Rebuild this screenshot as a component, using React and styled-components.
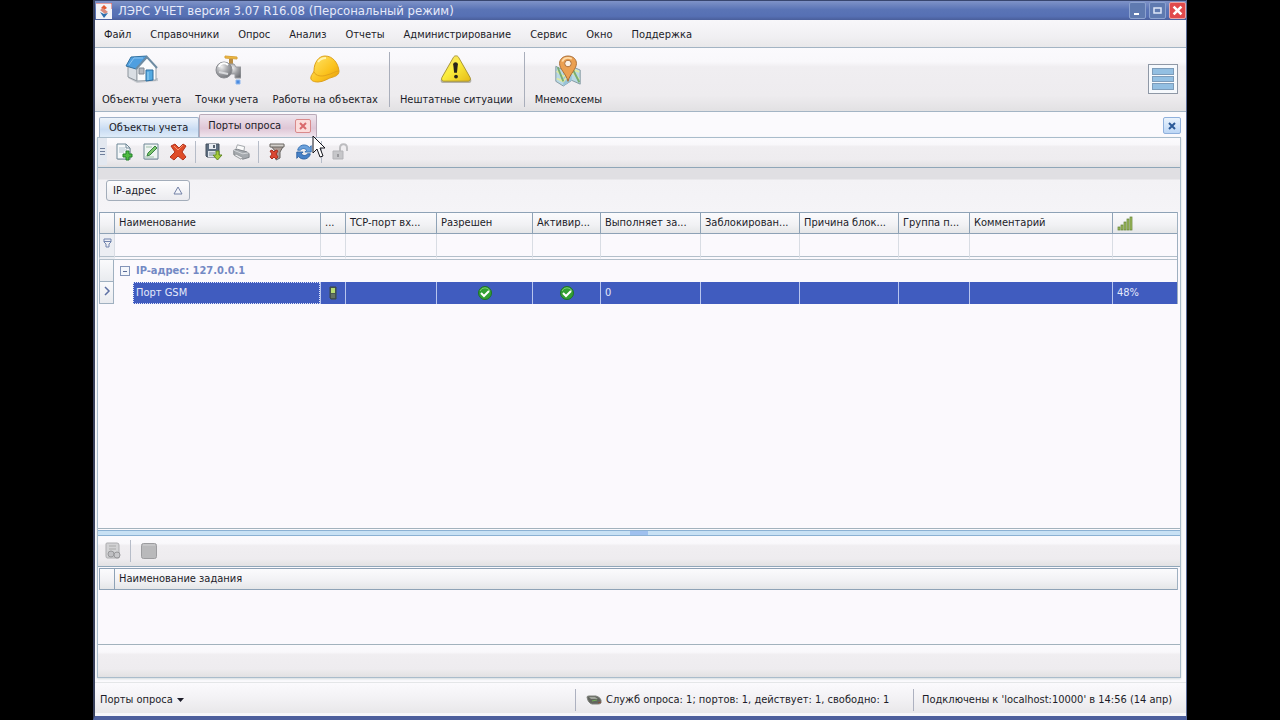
import React from 'react';
import styled, { createGlobalStyle, css } from 'styled-components';

const GlobalStyle = createGlobalStyle`
    *, *::before, *::after {
        box-sizing: border-box;
    }
    body {
        margin: 0;
        background: #000;
        color: #1c1c28;
        font-family: 'DejaVu Sans Condensed', 'DejaVu Sans', sans-serif;
        font-size: 11px;
        line-height: 14px;
    }
    button, input {
        font: inherit;
        color: inherit;
    }
    button {
        margin: 0;
        padding: 0;
        border: 0;
        background: none;
    }
`;

const band = css`
    background: linear-gradient(#fbfafd 0%, #f9f8fb 22%, #f0eef1 30%, #eeecef 75%, #e2e1e3 100%);
`;

const Window = styled.div`
    display: flex;
    flex-direction: column;
    min-height: 100vh;
    margin: 0 93px;
    border-left: 2px solid #39415c;
    border-right: 1px solid #5a6a94;
    border-bottom: 4px solid #4d5f9c;
    background: #fbfafd;
`;

const TitleBar = styled.header`
    display: flex;
    align-items: center;
    gap: 6px;
    height: 20px;
    padding-left: 1px;
    border-top: 1px solid #38466f;
    background: linear-gradient(#7f93c8, #5a74b6 45%, #5670b4 80%, #4a5f9b);
    color: #e6eafa;
`;

const TitleText = styled.h1`
    flex: 1;
    margin: 0;
    font-size: 13px;
    font-weight: 400;
    line-height: 16px;
`;

const WindowButtons = styled.div`
    display: flex;
    gap: 3px;
`;

const WindowButton = styled.button`
    display: grid;
    place-items: center;
    width: 17px;
    height: 17px;
    border: 1px solid ${({ $danger }) => ($danger ? '#e9a5a5' : '#8ca2cf')};
    border-radius: 2px;
    background: ${({ $danger }) => ($danger ? '#e14a4c' : '#5f7ab0')};
`;

const MenuBar = styled.nav`
    display: flex;
    gap: 19px;
    height: 28px;
    padding: 8px 9px 0;
    border-bottom: 1px solid #a3b4c4;
    background: linear-gradient(#f8f7fa, #f1f0f3 60%, #e9e8ea);
`;

const MenuItem = styled.button`
    height: 14px;
`;

const Ribbon = styled.div`
    display: flex;
    align-items: stretch;
    height: 64px;
    border-bottom: 1px solid #a3b4c4;
    ${band}
`;

const RibbonButton = styled.button`
    display: flex;
    flex-direction: column;
    align-items: center;
    justify-content: space-between;
    padding: 6px 7px 4px;
    white-space: nowrap;
`;

const RibbonLine = styled.span`
    width: 1px;
    margin: 4px 3px 4px 4px;
    background: #a9aebb;
`;

const ListButton = styled.button`
    display: flex;
    flex-direction: column;
    justify-content: center;
    gap: 1px;
    width: 30px;
    height: 30px;
    margin: 16px 8px 0 auto;
    padding: 3px;
    border: 1px solid #8f98a6;
    background: #f6f9fd;
    & > span {
        height: 7px;
        border: 1px solid #7d9cba;
        background: #93bfe2;
    }
`;

const TabStrip = styled.div`
    display: flex;
    align-items: flex-end;
    height: 25px;
    padding: 0 5px 0 4px;
`;

const Tab = styled.button`
    position: relative;
    display: flex;
    align-items: center;
    gap: 14px;
    height: ${({ $active }) => ($active ? 23 : 20)}px;
    padding: 0 ${({ $active }) => ($active ? 5 : 10)}px 0 ${({ $active }) => ($active ? 8 : 9)}px;
    border: 1px solid ${({ $active }) => ($active ? '#b9a9b8' : '#9fb1c9')};
    border-bottom: 0;
    border-radius: 2px 2px 0 0;
    background: ${({ $active }) => ($active
        ? 'linear-gradient(#eee6ee, #dfc6d6 60%, #f0e6ee)'
        : 'linear-gradient(#eef4fb, #c9dcf3 60%, #dfecf9)')};
`;

const CloseMark = styled.span`
    display: grid;
    place-items: center;
    width: 16px;
    height: 14px;
    border: 1px solid #d98a8c;
    border-radius: 2px;
    background: #fbdcdb;
`;

const Cursor = styled.svg`
    position: absolute;
    left: 112px;
    top: 20px;
    z-index: 2;
`;

const CloseAll = styled.button`
    display: grid;
    place-items: center;
    width: 18px;
    height: 17px;
    margin: 0 0 3px auto;
    border: 1px solid #8fb0dc;
    border-radius: 2px;
    background: linear-gradient(#eaf3fd, #bcd6f5);
`;

const Document = styled.main`
    display: flex;
    flex: 1;
    flex-direction: column;
    margin: 0 5px 4px 2px;
    border: 1px solid #a9bccb;
    box-shadow: 0 1px 2px #d3dbde;
`;

const ToolBar = styled.div`
    display: flex;
    align-items: center;
    height: 30px;
    padding: 0 0 2px ${({ $inset }) => $inset}px;
    border-bottom: 1px solid #8fa6b8;
    ${band}
`;

const Grip = styled.span`
    display: flex;
    flex-direction: column;
    justify-content: center;
    gap: 1px;
    width: 12px;
    height: 27px;
    padding: 0 5px 0 2px;
    background: linear-gradient(90deg, #e3e8f0 9px, transparent 9px);
    & > i {
        height: 1px;
        background: #6f7f9c;
        margin-bottom: 1px;
    }
`;

const ToolButton = styled.button`
    display: grid;
    place-items: center;
    width: 27px;
    height: 22px;
`;

const ToolLine = styled.span`
    width: 1px;
    height: 22px;
    margin: 0 4px;
    background: #b6bcc8;
`;

const GroupPanel = styled.div`
    height: 44px;
    padding: 12px 7px 0 8px;
    background: linear-gradient(#e0dfe3 0, #e0dfe3 11px, #f3f2f5 12px, #f5f4f7 100%);
`;

const GroupChip = styled.button`
    display: flex;
    align-items: center;
    gap: 17px;
    height: 21px;
    padding: 0 6px;
    border: 1px solid #a3adba;
    border-radius: 3px;
    background: linear-gradient(#fdfdfe, #ebebef);
`;

const GridPane = styled.section`
    flex: ${({ $grow }) => ($grow ? '1 0 auto' : '0 0 auto')};
    min-height: 78px;
    padding: ${({ $grow }) => ($grow ? '0 2px 0 1px' : '1px 2px 0 1px')};
    border-bottom: 1px solid #a2b2bd;
    background: #fbf9fd;
`;

const Grid = styled.table`
    width: 100%;
    table-layout: fixed;
    border-collapse: separate;
    border-spacing: 0;
    border-right: 1px solid #9fb0c0;
`;

const HeadCell = styled.th`
    height: 22px;
    padding: 0 2px 0 4px;
    border: solid #8ea2b6;
    border-width: 1px 0 1px 1px;
    background: linear-gradient(#fbfbfd, #f1f1f4 60%, #e5e6e8);
    font-weight: 400;
    text-align: left;
    white-space: nowrap;
    overflow: hidden;
    & > svg {
        display: block;
    }
`;

const FilterCell = styled.td`
    height: 26px;
    padding: 0;
    border-left: 1px solid ${({ $marker }) => ($marker ? '#9fb0c0' : '#d9dde4')};
    border-bottom: 4px double #b3bfca;
    background: ${({ $marker }) => ($marker ? '#eceef3' : 'transparent')};
    text-align: center;
`;

const FilterInput = styled.input`
    display: block;
    width: 100%;
    height: 20px;
    padding: 0 3px;
    border: 0;
    background: transparent;
    outline: 0;
`;

const MarkerCell = styled.td`
    padding: 0;
    border: solid #9fb0c0;
    border-width: 0 1px 1px 1px;
    background: linear-gradient(#fafafc, #e9ebef);
    text-align: center;
`;

const GroupCell = styled.td`
    height: 22px;
    padding: 0 6px;
    color: #7389c4;
    font-weight: 700;
`;

const GroupLabel = styled.div`
    display: flex;
    align-items: center;
    gap: 6px;
`;

const Expander = styled.button`
    display: grid;
    place-items: center;
    width: 10px;
    height: 10px;
    border: 1px solid #8394b8;
    background: #f4f6fb;
    &::after {
        content: '';
        width: 4px;
        height: 1px;
        background: #5a6c98;
    }
`;

const DataCell = styled.td`
    height: 22px;
    padding: 0 4px;
    border-left: 1px solid #b8c5ee;
    background: #405cbf;
    color: #e4e9fb;
    text-align: ${({ $center }) => ($center ? 'center' : 'left')};
    & > svg {
        display: block;
        margin: 0 auto;
    }
`;

const NameCell = styled.td`
    height: 22px;
    padding: 0 0 0 19px;
`;

const NameValue = styled.div`
    height: 22px;
    padding: 3px 2px;
    border: 1px dotted #dfe5fb;
    background: #405cbf;
    color: #e4e9fb;
`;

const Splitter = styled.div`
    display: flex;
    justify-content: center;
    height: 6px;
    margin: 1px 0;
    border: solid #8bb1d3;
    border-width: 1px 0;
    background: #c8e1f4;
    &::after {
        content: '';
        width: 18px;
        background: #9fc0ee;
    }
`;

const BottomBand = styled.div`
    height: 32px;
    ${band}
`;

const StatusBar = styled.footer`
    display: flex;
    align-items: center;
    height: 34px;
    padding: 0 7px 0 5px;
    border-top: 1px solid #e4e6e8;
    background: linear-gradient(#fbfafd 0%, #f4f3f6 40%, #e9e8ea 90%, #f7f7fa 91%);
`;

const StatusButton = styled.button`
    display: flex;
    align-items: center;
    gap: 4px;
    margin-right: auto;
`;

const StatusText = styled.span`
    display: flex;
    align-items: center;
    gap: 4px;
    min-width: ${({ $width }) => $width}px;
    padding-left: ${({ $inset }) => $inset}px;
    white-space: nowrap;
`;

const StatusLine = styled.span`
    width: 1px;
    height: 22px;
    background: #adb1c0;
`;

const LogoIcon = () => (
    <svg width="16" height="16" viewBox="0 0 16 16">
        <path d="M0 0h16v16H0z" fill="#f2f3f8" />
        <path d="M0 0h16v6" fill="none" stroke="#d34c4c" />
        <path d="M8 2 11 5 8 7 5 5z" fill="#e2572f" />
        <path d="m4 7 3-2 5 4-3 2z" fill="#d98b7c" />
        <path d="m4 9 4 2 4-1-4 5z" fill="#2d6fae" />
    </svg>
);

const HouseIcon = () => (
    <svg width="34" height="30" viewBox="0 0 34 30">
        <path d="m3 24 9 5 21-2v-3z" fill="#8d959d" opacity=".4" />
        <path d="M3 12v11l9 4V13z" fill="#d9dee4" stroke="#8d959c" />
        <path d="M12 13 22 4l9 9v13l-19 1z" fill="#fafbfc" stroke="#98a1a9" />
        <path d="M6 3 22 2 11 15 1 12z" fill="#4f9fe0" stroke="#34719f" />
        <path d="m4 11 5-7h9" fill="none" stroke="#8cc5f0" />
        <path d="m11 15 11-12 10 11" fill="none" stroke="#6e8ca3" strokeWidth="2" />
        <path d="M14 14h5v6h-5z" fill="#b4bac2" stroke="#808892" />
        <path d="M21 16h7v10l-7 1z" fill="#54aae2" stroke="#2c6d9f" />
        <path d="M23 18v8" stroke="#9dd6f5" />
    </svg>
);

const TapIcon = () => (
    <svg width="28" height="32" viewBox="0 0 28 32">
        <defs>
            <radialGradient id="steel" cx=".35" cy=".3" r=".8">
                <stop offset="0" stopColor="#efeff0" />
                <stop offset=".5" stopColor="#a3a4a8" />
                <stop offset="1" stopColor="#6c6e73" />
            </radialGradient>
        </defs>
        <path d="M16 5h4v6h-4z" fill="#b88c45" />
        <path d="m12 2 12 1v2L12 4z" fill="#edb93d" stroke="#d9a23a" />
        <path d="M15 10h6l2 3h5v11h-6v-4h-7z" fill="url(#steel)" stroke="#9a9ca1" />
        <ellipse cx="11" cy="16" rx="8" ry="8" fill="url(#steel)" stroke="#8a8c91" />
        <path d="M6 13c1-4 6-5 9-2" fill="none" stroke="#fff" strokeWidth="2" />
        <path d="m6 18 9 2" stroke="#d8d9dc" strokeWidth="2" />
        <path d="M23 26h4v4h-4z" fill="#4c8ce0" stroke="#8fb8ee" />
    </svg>
);

const HelmetIcon = () => (
    <svg width="32" height="30" viewBox="0 0 32 30">
        <defs>
            <linearGradient id="helmet" x1="0" y1="0" x2="1" y2="1">
                <stop offset="0" stopColor="#ffe76e" />
                <stop offset=".6" stopColor="#fbc21c" />
                <stop offset="1" stopColor="#e39a0c" />
            </linearGradient>
        </defs>
        <path d="M5 17C5 8 10 2 16 2c8 0 13 7 14 15 0 3-2 5-6 6-5 1-9 5-15 5-5 0-8-2-7-5 0-2 2-3 3-6z" fill="url(#helmet)" stroke="#dda11d" />
        <path d="M5 18c2 4 7 5 13 3 5-1 8-4 12-4" fill="none" stroke="#e3a31a" />
        <path d="M9 8c2-3 5-4 8-4" fill="none" stroke="#fff3ae" strokeWidth="2" />
    </svg>
);

const WarningIcon = () => (
    <svg width="34" height="30" viewBox="0 0 36 32">
        <defs>
            <linearGradient id="warn" x1="0" y1="0" x2="1" y2="1">
                <stop offset="0" stopColor="#f6d77c" />
                <stop offset=".45" stopColor="#fbee3e" />
                <stop offset="1" stopColor="#e6ba16" />
            </linearGradient>
        </defs>
        <path d="M18 3c1 0 2 0 3 2l13 22c1 2 0 4-2 4H4c-2 0-3-2-2-4L15 5c1-2 2-2 3-2z" fill="#77745c" opacity=".5" />
        <path d="M18 2c1 0 2 0 3 2l12 21c1 2 0 4-2 4H5c-2 0-3-2-2-4L15 4c1-2 2-2 3-2z" fill="url(#warn)" stroke="#a59232" />
        <path d="M15 11c0-3 5-3 5 0l-1 9h-3z" fill="#28241a" />
        <circle cx="18" cy="24" r="2" fill="#28241a" />
    </svg>
);

const MapIcon = () => (
    <svg width="30" height="34" viewBox="0 0 32 34">
        <path d="m3 12 8 4 9-4 9 4v15l-9-4-9 6-8-5z" fill="#b9d9e5" stroke="#8298a0" />
        <path d="m11 16 9-4v15l-9 6z" fill="#98c3d8" />
        <path d="m4 17 7 6 9-8 8 3M4 25l7 3 9-10 8 8" fill="none" stroke="#dfe9a2" strokeWidth="2" />
        <path d="m5 13 6 15M20 13l8 16" stroke="#79ad72" strokeWidth="2" />
        <path d="M16 1c6 0 9 4 9 8 0 6-7 11-9 19C14 20 7 15 7 9c0-4 3-8 9-8z" fill="#eba052" stroke="#a66931" />
        <path d="M10 7c1-4 6-5 10-3" fill="none" stroke="#ffdca8" strokeWidth="2" />
        <circle cx="16" cy="9" r="3.500" fill="#fcf3e8" stroke="#a96a34" />
    </svg>
);

const SheetIcon = ({ kind }) => (
    <svg width="18" height="18" viewBox="0 0 18 18">
        <path d="M3 2h9l4 4v11H3z" fill="#7d858d" opacity=".35" />
        {kind === 'add' ? (
            <>
                <path d="M2 1h9l4 4v11H2z" fill="#f5f8fa" stroke="#6f8796" />
                <path d="M11 1v4h4" fill="none" stroke="#6f8796" />
                <path d="M4 5h6M4 7h8M4 9h5" stroke="#b3c4cf" />
                <path d="M11 8h3v3h3v3h-3v3h-3v-3H8v-3h3z" fill="#4fbc42" stroke="#23812a" />
            </>
        ) : (
            <>
                <path d="M2 1h14v15H2z" fill="#eef4f1" stroke="#6f8796" />
                <path d="m5 13 1-3 7-7 2 2-7 7z" fill="#7cc46b" stroke="#388143" />
                <path d="M4 4h6M3 14h9" stroke="#9fbfaa" />
            </>
        )}
    </svg>
);

const DeleteIcon = () => (
    <svg width="18" height="18" viewBox="0 0 18 18">
        <path d="m2 3 4-2 4 4 4-4 3 2-4 6 4 5-3 3-5-4-4 4-4-3 5-5z" fill="#df4c28" stroke="#b2331d" />
        <path d="m5 3 4 4 5-5" fill="none" stroke="#f39a77" />
    </svg>
);

const SaveIcon = () => (
    <svg width="18" height="18" viewBox="0 0 18 18">
        <path d="M1 1h13v13H2l-1-1z" fill="#5c6c7f" stroke="#44505f" />
        <path d="M4 1h7v5H4z" fill="#e8ecf2" />
        <path d="M8 2h2v3H8z" fill="#55606e" />
        <path d="M3 8h9v6H3z" fill="#dfe5ec" />
        <path d="M4 10h6M4 12h4" stroke="#7b8998" />
        <path d="M11 8h3v4h3l-4.500 5L8 12h3z" fill="#a6cb3a" stroke="#5f8824" />
    </svg>
);

const PrintIcon = () => (
    <svg width="18" height="18" viewBox="0 0 20 18">
        <path d="m6 1 8 2-1 6-9-2z" fill="#fafafa" stroke="#9b9fa4" />
        <path d="m2 7 4-1 11 3 2 2v4l-7 2-10-5z" fill="#a5a9ae" stroke="#7b7f84" />
        <path d="m2 7 10 4 6-1" fill="none" stroke="#d9dbde" />
        <path d="m4 11 8 4-2 2-7-4z" fill="#ececee" stroke="#94979b" />
    </svg>
);

const FunnelIcon = () => (
    <svg width="18" height="18" viewBox="0 0 18 18">
        <path d="M2 2h14l-4 7v6l-4 2V9z" fill="#a99b95" stroke="#65625f" />
        <path d="M2 1h14v3H2z" fill="#d4d0cc" stroke="#6a6663" />
        <path d="m2 8 2-1 2 2 2-2 2 1-2 3 2 3-2 2-2-2-2 2-2-2 2-3z" fill="#da4732" stroke="#a8301f" />
    </svg>
);

const RefreshIcon = () => (
    <svg width="18" height="18" viewBox="0 0 20 18">
        <path d="M3 7c1-6 9-8 13-3l2-2v7h-7l2-2c-3-3-5-2-7 0z" fill="#6ba1dc" stroke="#326db0" />
        <path d="M17 11c-1 6-9 8-13 3l-2 2V9h7l-2 2c3 3 5 2 7 0z" fill="#4681c8" stroke="#2d609f" />
    </svg>
);

const UnlockIcon = () => (
    <svg width="18" height="18" viewBox="0 0 18 18">
        <path d="M9 9V5c0-5 7-5 7 0v3" fill="none" stroke="#bdbdc0" strokeWidth="2" />
        <path d="M2 8h10v8H2z" fill="#c6c6c9" stroke="#b3b3b7" />
        <path d="M7 11v3" stroke="#98989c" strokeWidth="2" />
    </svg>
);

const DimSheetIcon = () => (
    <svg width="18" height="18" viewBox="0 0 18 18">
        <path d="M2 2q0-1 1-1h10q2 0 2 2v13H3q-1 0-1-2z" fill="#d2d2d4" stroke="#acacaf" />
        <path d="M5 4h7M5 7h7" stroke="#aaa" />
        <circle cx="7" cy="12" r="3" fill="#bfbfc2" stroke="#97979a" />
        <circle cx="13" cy="13" r="3" fill="#c7c7ca" stroke="#97979a" />
    </svg>
);

const StopIcon = () => (
    <svg width="18" height="18" viewBox="0 0 18 18">
        <rect x="1.500" y="1.500" width="15" height="15" rx="2" fill="#b9b9bb" stroke="#9c9c9f" />
        <path d="M3 3h12" stroke="#d1d1d3" />
    </svg>
);

const CheckIcon = () => (
    <svg width="16" height="16" viewBox="0 0 16 16">
        <circle cx="8" cy="8" r="6.500" fill="#33a034" stroke="#1e7425" />
        <path d="M3 6a5.500 5.500 0 0 1 10 0" fill="none" stroke="#7fcc72" />
        <path d="m4 8 3 3 5-5" fill="none" stroke="#fff" strokeWidth="2" />
    </svg>
);

const PhoneIcon = () => (
    <svg width="10" height="16" viewBox="0 0 10 16">
        <path d="M2 2h6v12H3l-1-1z" fill="#4b5a51" stroke="#3a4948" />
        <path d="M3 3h4v5H3z" fill="#b5dc72" />
        <path d="M3 10h4M3 12h4" stroke="#7c8a7c" />
    </svg>
);

const SignalIcon = () => (
    <svg width="17" height="15" viewBox="0 0 17 15">
        {[3, 5, 8, 11, 13].map((height, i) => (
            <rect key={height} x={i * 3 + 1} y={14 - height} width="2" height={height} fill="#a3bf61" stroke="#5f7f31" strokeWidth=".7" />
        ))}
    </svg>
);

const PlugIcon = () => (
    <svg width="16" height="10" viewBox="0 0 16 10">
        <path d="M1 2q0-1 2-1h7q4 1 5 4v3q-1 1-3 1H6Q2 8 1 2z" fill="#62655f" stroke="#7e817b" />
        <path d="M3 2h6l3 2H5z" fill="#a1a59c" />
        <path d="m6 6 5-1" stroke="#6fae53" />
        <path d="m12 8 3-1" stroke="#8e4a38" />
    </svg>
);

const CrossIcon = ({ color, size }) => (
    <svg width={size} height={size} viewBox="0 0 10 10">
        <path d="m2 2 6 6M8 2 2 8" stroke={color} strokeWidth="2" />
    </svg>
);

const menu = ['Файл', 'Справочники', 'Опрос', 'Анализ', 'Отчеты', 'Администрирование', 'Сервис', 'Окно', 'Поддержка'];

const columns = [
    { title: 'Наименование', width: 206 },
    { title: '...', width: 25, value: <PhoneIcon />, center: true },
    { title: 'TCP-порт вх...', width: 91 },
    { title: 'Разрешен', width: 96, value: <CheckIcon />, center: true },
    { title: 'Активир...', width: 68, value: <CheckIcon />, center: true },
    { title: 'Выполняет за...', width: 100, value: '0' },
    { title: 'Заблокирован...', width: 99 },
    { title: 'Причина блок...', width: 99 },
    { title: 'Группа п...', width: 71 },
    { title: 'Комментарий' },
    { title: <SignalIcon />, width: 65, value: '48%' },
];

const PortsGrid = () => (
    <Grid>
        <colgroup>
            <col style={{ width: 15 }} />
            {columns.map((column, i) => (
                <col key={i} style={{ width: column.width }} />
            ))}
        </colgroup>
        <thead>
            <tr>
                <HeadCell />
                {columns.map((column, i) => (
                    <HeadCell key={i} scope="col">{column.title}</HeadCell>
                ))}
            </tr>
        </thead>
        <tbody>
            <tr>
                <FilterCell $marker>
                    <svg width="9" height="10" viewBox="0 0 9 10">
                        <path d="M1 1h7v3L6 6v3H3V6L1 4zM1 3.500h7" fill="none" stroke="#7083ad" />
                    </svg>
                </FilterCell>
                {columns.map((column, i) => (
                    <FilterCell key={i}>
                        <FilterInput aria-label={`filter ${i + 1}`} />
                    </FilterCell>
                ))}
            </tr>
            <tr>
                <MarkerCell />
                <GroupCell colSpan={columns.length}>
                    <GroupLabel>
                        <Expander aria-label="collapse" />
                        IP-адрес: 127.0.0.1
                    </GroupLabel>
                </GroupCell>
            </tr>
            <tr>
                <MarkerCell>
                    <svg width="8" height="10" viewBox="0 0 8 10">
                        <path d="m2 1 4 4-4 4" fill="none" stroke="#5d70a4" strokeWidth="1.500" />
                    </svg>
                </MarkerCell>
                <NameCell>
                    <NameValue>Порт GSM</NameValue>
                </NameCell>
                {columns.slice(1).map((column, i) => (
                    <DataCell key={i} $center={column.center}>{column.value}</DataCell>
                ))}
            </tr>
        </tbody>
    </Grid>
);

const App = () => {
    return (
        <>
            <GlobalStyle />
            <Window>
                <TitleBar>
                    <LogoIcon />
                    <TitleText>ЛЭРС УЧЕТ версия 3.07 R16.08 (Персональный режим)</TitleText>
                    <WindowButtons>
                        <WindowButton aria-label="minimize">
                            <svg width="11" height="11" viewBox="0 0 11 11"><path d="M2 9h5" stroke="#fff" strokeWidth="2" /></svg>
                        </WindowButton>
                        <WindowButton aria-label="maximize">
                            <svg width="11" height="11" viewBox="0 0 11 11"><path d="M2 3h7v5H2z" fill="none" stroke="#dfe7f8" strokeWidth="1.500" /></svg>
                        </WindowButton>
                        <WindowButton $danger aria-label="close">
                            <CrossIcon color="#fff" size={13} />
                        </WindowButton>
                    </WindowButtons>
                </TitleBar>

                <MenuBar>
                    {menu.map((item) => (
                        <MenuItem key={item}>{item}</MenuItem>
                    ))}
                </MenuBar>

                <Ribbon>
                    <RibbonButton><HouseIcon />Объекты учета</RibbonButton>
                    <RibbonButton><TapIcon />Точки учета</RibbonButton>
                    <RibbonButton><HelmetIcon />Работы на объектах</RibbonButton>
                    <RibbonLine />
                    <RibbonButton><WarningIcon />Нештатные ситуации</RibbonButton>
                    <RibbonLine />
                    <RibbonButton><MapIcon />Мнемосхемы</RibbonButton>
                    <ListButton aria-label="list">
                        <span />
                        <span />
                        <span />
                    </ListButton>
                </Ribbon>

                <TabStrip>
                    <Tab>Объекты учета</Tab>
                    <Tab $active>
                        Порты опроса
                        <CloseMark><CrossIcon color="#d9696c" size={10} /></CloseMark>
                        <Cursor width="14" height="24" viewBox="0 0 14 24">
                            <path d="M1 1v17l4-4 3 8 3-1-3-8h5z" fill="#fff" stroke="#15151c" />
                        </Cursor>
                    </Tab>
                    <CloseAll aria-label="close tab"><CrossIcon color="#2b5a98" size={10} /></CloseAll>
                </TabStrip>

                <Document>
                    <ToolBar $inset={0}>
                        <Grip><i /><i /><i /></Grip>
                        <ToolButton aria-label="add"><SheetIcon kind="add" /></ToolButton>
                        <ToolButton aria-label="edit"><SheetIcon kind="edit" /></ToolButton>
                        <ToolButton aria-label="delete"><DeleteIcon /></ToolButton>
                        <ToolLine />
                        <ToolButton aria-label="save"><SaveIcon /></ToolButton>
                        <ToolButton aria-label="print"><PrintIcon /></ToolButton>
                        <ToolLine />
                        <ToolButton aria-label="clear filter"><FunnelIcon /></ToolButton>
                        <ToolButton aria-label="refresh"><RefreshIcon /></ToolButton>
                        <ToolLine />
                        <ToolButton aria-label="unlock" disabled><UnlockIcon /></ToolButton>
                    </ToolBar>
                    <GroupPanel>
                        <GroupChip>
                            IP-адрес
                            <svg width="10" height="9" viewBox="0 0 10 9"><path d="m5 1 4 7H1z" fill="#f3f5fa" stroke="#7381a6" /></svg>
                        </GroupChip>
                    </GroupPanel>
                    <GridPane $grow>
                        <PortsGrid />
                    </GridPane>
                    <Splitter />
                    <ToolBar $inset={1}>
                        <ToolButton aria-label="task" disabled><DimSheetIcon /></ToolButton>
                        <ToolLine />
                        <ToolButton aria-label="stop" disabled><StopIcon /></ToolButton>
                    </ToolBar>
                    <GridPane>
                        <Grid>
                            <colgroup>
                                <col style={{ width: 15 }} />
                                <col />
                            </colgroup>
                            <thead>
                                <tr>
                                    <HeadCell />
                                    <HeadCell scope="col">Наименование задания</HeadCell>
                                </tr>
                            </thead>
                        </Grid>
                    </GridPane>
                    <BottomBand />
                </Document>

                <StatusBar>
                    <StatusButton>
                        Порты опроса
                        <svg width="7" height="4" viewBox="0 0 7 4"><path d="M0 0h7L3.500 4z" fill="#1c1c28" /></svg>
                    </StatusButton>
                    <StatusLine />
                    <StatusText $width={337} $inset={10}>
                        <PlugIcon />
                        Служб опроса: 1; портов: 1, действует: 1, свободно: 1
                    </StatusText>
                    <StatusLine />
                    <StatusText $width={265} $inset={8}>Подключены к 'localhost:10000' в 14:56 (14 апр)</StatusText>
                </StatusBar>
            </Window>
        </>
    );
};

export default App;
